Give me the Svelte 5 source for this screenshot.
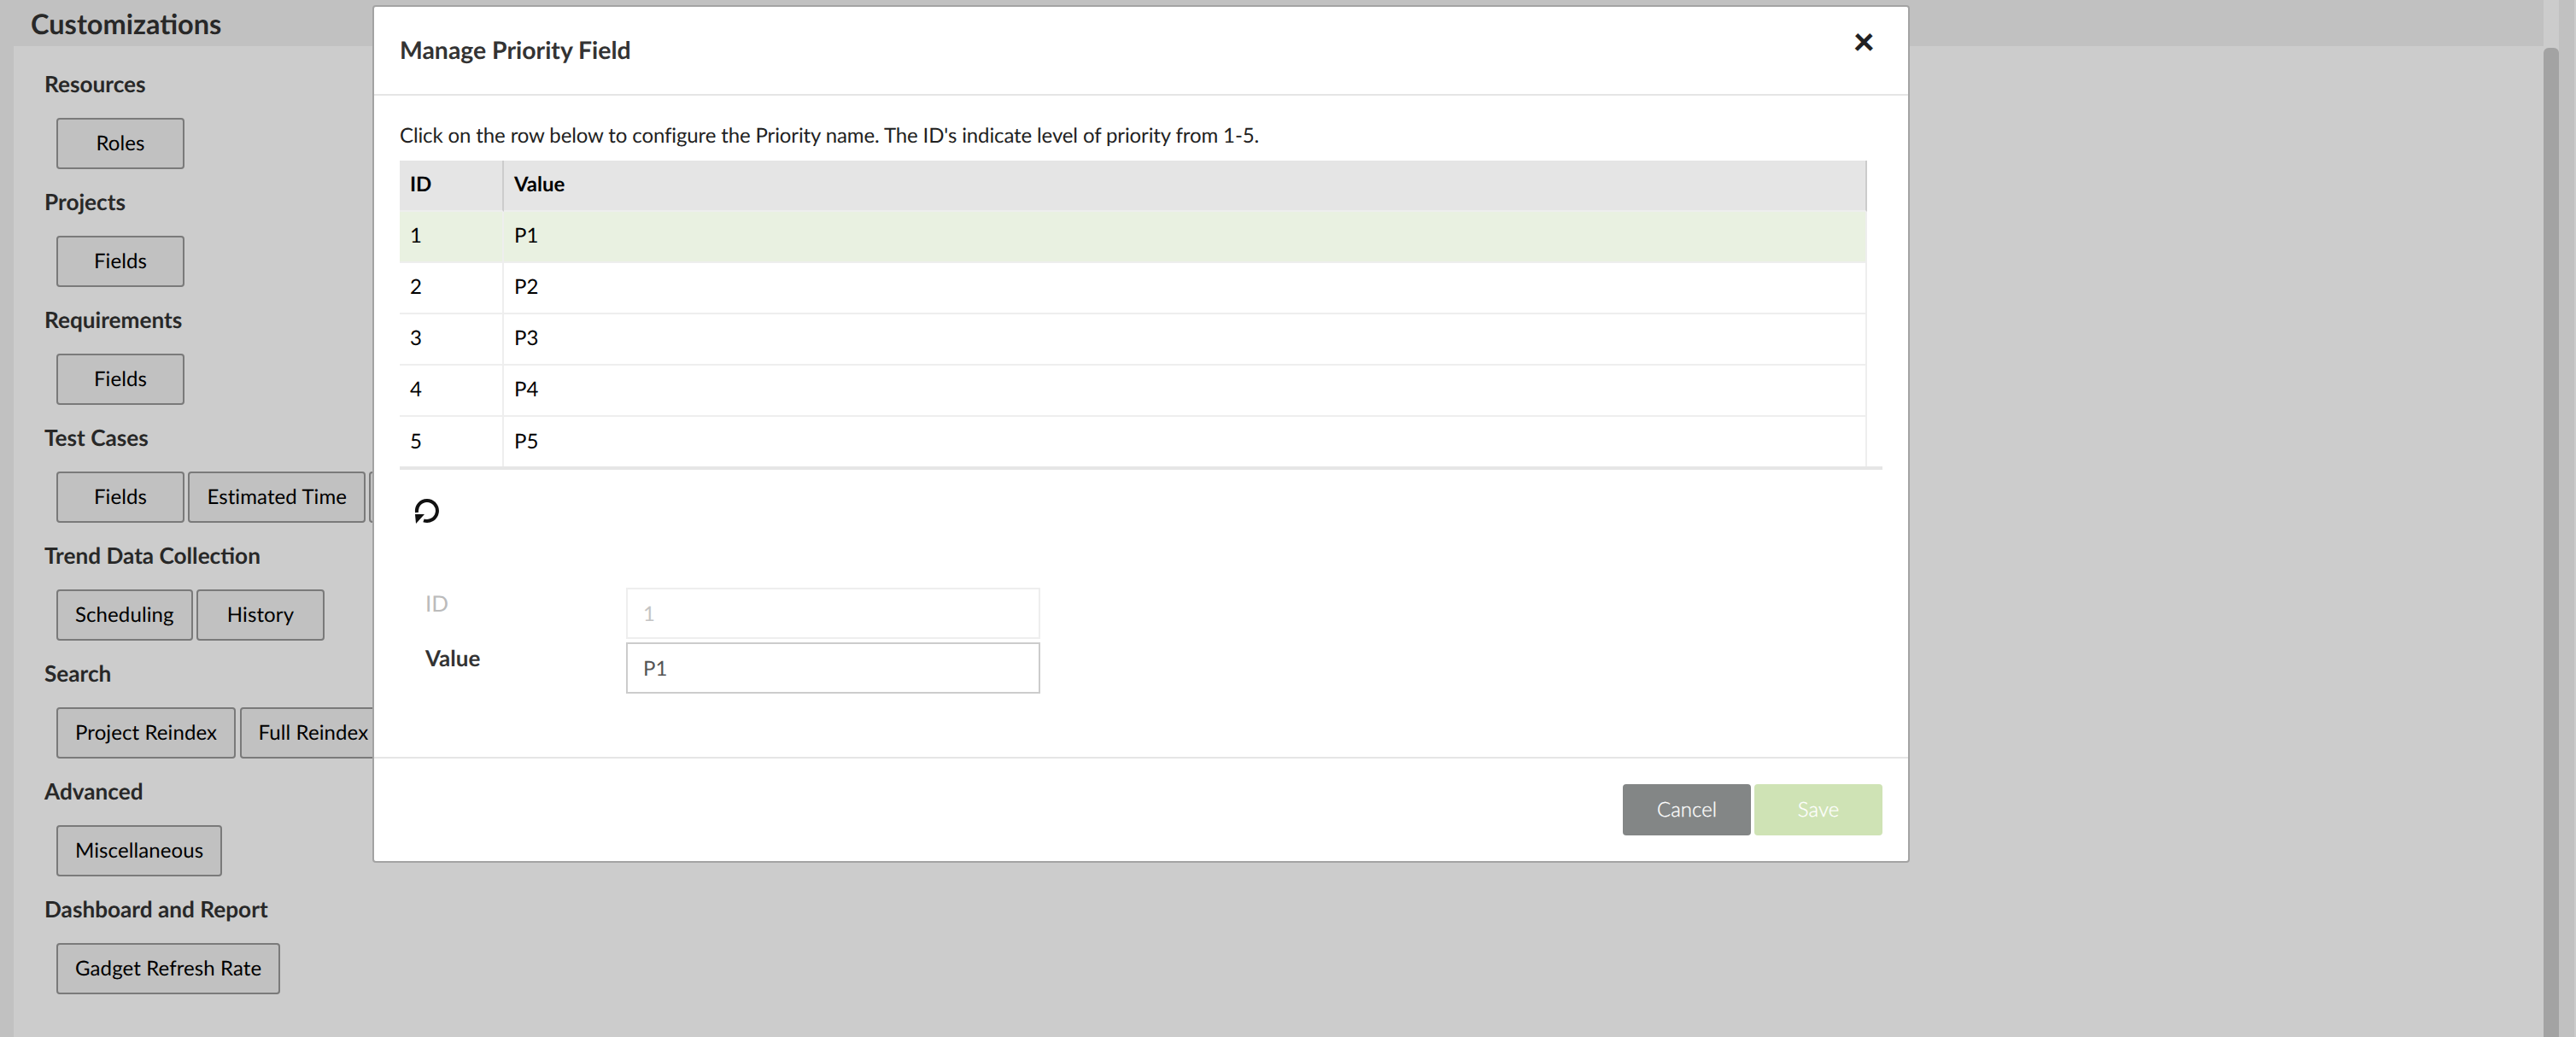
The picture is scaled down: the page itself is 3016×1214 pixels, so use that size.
<script>
	const sections = [
		{ title: 'Resources', buttons: ['Roles'] },
		{ title: 'Projects', buttons: ['Fields'] },
		{ title: 'Requirements', buttons: ['Fields'] },
		{ title: 'Test Cases', buttons: ['Fields', 'Estimated Time', 'Priority'] },
		{ title: 'Trend Data Collection', buttons: ['Scheduling', 'History'] },
		{ title: 'Search', buttons: ['Project Reindex', 'Full Reindex'] },
		{ title: 'Advanced', buttons: ['Miscellaneous'] },
		{ title: 'Dashboard and Report', buttons: ['Gadget Refresh Rate'] }
	];
	const rows = [1, 2, 3, 4, 5];
</script>

<div class="page">
	<div class="main">
		<div class="band"><h1>Customizations</h1></div>
		<div class="panel">
			{#each sections as s}
				<section>
					<h2>{s.title}</h2>
					<div class="btns">
						{#each s.buttons as b}
							<button class="tile">{b}</button>
						{/each}
					</div>
				</section>
			{/each}
		</div>
	</div>
	<div class="scrollbar"><div class="thumb"></div></div>
	<div class="edge"></div>
</div>

<div class="backdrop"></div>

<div class="modal">
	<header>
		<h3>Manage Priority Field</h3>
		<span class="close">×</span>
	</header>
	<div class="body">
		<p>Click on the row below to configure the Priority name. The ID's indicate level of priority from 1-5.</p>
		<div class="grid">
			<table>
				<thead>
					<tr><th class="id">ID</th><th>Value</th></tr>
				</thead>
				<tbody>
					{#each rows as r, i}
						<tr class:selected={i === 0}><td class="id">{r}</td><td>P{r}</td></tr>
					{/each}
				</tbody>
			</table>
		</div>
		<div class="tools">
			<svg width="32" height="32" viewBox="0 0 32 32" fill="none">
				<path d="M4.1 18A12 12 0 1 1 12 27.3" stroke="#111" stroke-width="4" />
				<path d="M2 20h11L3 31z" fill="#111" />
			</svg>
		</div>
		<form>
			<div class="field disabled">
				<label for="pid">ID</label>
				<input id="pid" value="1" disabled />
			</div>
			<div class="field">
				<label for="pval">Value</label>
				<input id="pval" value="P1" />
			</div>
		</form>
	</div>
	<footer>
		<button class="cancel">Cancel</button>
		<button class="save">Save</button>
	</footer>
</div>

<style>
	:global(body) {
		margin: 0;
		background: #fff;
		font-family: Lato, "Open Sans", sans-serif;
		text-rendering: geometricPrecision;
		overflow: hidden;
	}
	button,
	input {
		text-rendering: inherit;
	}
	.page {
		display: flex;
		width: 3016px;
		height: 1214px;
		overflow: hidden;
	}
	.main {
		width: 2978px;
		background: #f2f2f2;
		display: flex;
		flex-direction: column;
	}
	.band {
		height: 54px;
		padding-left: 36px;
		flex: none;
	}
	h1 {
		margin: 0;
		font-size: 32.5px;
		line-height: 56px;
		font-weight: 700;
		color: #333;
	}
	.panel {
		margin-left: 16px;
		flex: 1;
		background: #fff;
		padding: 26px 0 0 36px;
	}
	section {
		height: 138px;
	}
	h2 {
		margin: 0 0 22px;
		font-size: 26.2px;
		line-height: 36px;
		font-weight: 700;
		color: #333;
	}
	.btns {
		display: flex;
		gap: 4.4px;
		padding-left: 14px;
	}
	.tile {
		height: 60px;
		min-width: 150px;
		padding: 0 20px 2px;
		flex: none;
		background: #f2f2f2;
		border: 2px solid #999;
		border-radius: 4px;
		font: 400 24px Lato, sans-serif;
		letter-spacing: 0.1px;
		color: #000;
	}
	.scrollbar {
		width: 18px;
		background: #fff;
		padding-top: 56px;
	}
	.thumb {
		height: 100%;
		background: #ccc;
		border-radius: 6px 6px 0 0;
	}
	.edge {
		flex: 1;
		background: #f2f2f2;
		border-right: 2px solid #fff;
	}
	.backdrop {
		position: fixed;
		inset: 0;
		background: rgba(0, 0, 0, 0.2);
	}
	.modal {
		position: fixed;
		left: 436px;
		top: 6px;
		width: 1800px;
		height: 1004px;
		box-sizing: border-box;
		display: flex;
		flex-direction: column;
		background: #fff;
		border: 2px solid #a3a3a3;
		border-radius: 4px;
		color: #333;
	}
	header {
		height: 104px;
		flex: none;
		box-sizing: border-box;
		display: flex;
		justify-content: space-between;
		padding: 0 30px;
		border-bottom: 2px solid #e5e5e5;
	}
	h3 {
		margin: 0;
		font-size: 28.4px;
		line-height: 102px;
		font-weight: 700;
		color: #333;
	}
	.close {
		font-size: 44px;
		font-weight: 900;
		line-height: 80px;
		color: #222;
		margin-right: 9px;
	}
	.body {
		flex: 1;
		padding: 0 30px;
	}
	p {
		margin: 0;
		height: 76px;
		box-sizing: border-box;
		padding-top: 30px;
		font-size: 24px;
		line-height: 34px;
		letter-spacing: -0.12px;
		color: #222;
	}
	.grid {
		width: 1736px;
		border-bottom: 4px solid #e6e6e6;
	}
	table {
		width: 1718px;
		border-collapse: separate;
		border-spacing: 0;
		table-layout: fixed;
		font-size: 24px;
		color: #000;
	}
	th,
	td {
		height: 60px;
		padding: 0 0 4px 12px;
		text-align: left;
		box-sizing: border-box;
		border-bottom: 2px solid #eee;
		border-right: 2px solid #eee;
	}
	tbody tr:last-child td {
		height: 58px;
		border-bottom: 0;
		padding-bottom: 2px;
	}
	th {
		background: #e5e5e5;
		font-weight: 700;
		border-right-color: #ccc;
	}
	th.id,
	td.id {
		width: 122px;
	}
	.selected td {
		background: #e9f1e1;
	}
	.tools {
		height: 138px;
		padding: 32px 0 0 16px;
		box-sizing: border-box;
	}
	svg {
		display: block;
	}
	form {
		display: flex;
		flex-direction: column;
		gap: 4px;
		padding-left: 30px;
	}
	.field {
		display: flex;
		height: 60px;
	}
	label {
		width: 235px;
		font-size: 26px;
		line-height: 36px;
		font-weight: 700;
		color: #333;
	}
	.disabled label {
		font-weight: 400;
		color: #bbb;
	}
	input {
		width: 485px;
		height: 60px;
		box-sizing: border-box;
		padding: 0 18px 0;
		border: 2px solid #ccc;
		background: #fff;
		outline: none;
		font: 400 24px Lato, sans-serif;
		color: #555;
	}
	input:disabled {
		border-color: #eee;
		color: #c4c4c4;
	}
	footer {
		height: 122px;
		flex: none;
		box-sizing: border-box;
		border-top: 2px solid #e5e5e5;
		display: flex;
		justify-content: flex-end;
		gap: 4px;
		padding: 30px 30px 0 0;
	}
	footer button {
		width: 150px;
		height: 60px;
		padding: 0 0 2px;
		border: 0;
		border-radius: 4px;
		color: #fff;
		font: 300 24px Lato, sans-serif;
		-webkit-text-stroke: 0.3px #fff;
	}
	.cancel {
		background: #838686;
	}
	.save {
		background: #cfe3b5;
	}
</style>
